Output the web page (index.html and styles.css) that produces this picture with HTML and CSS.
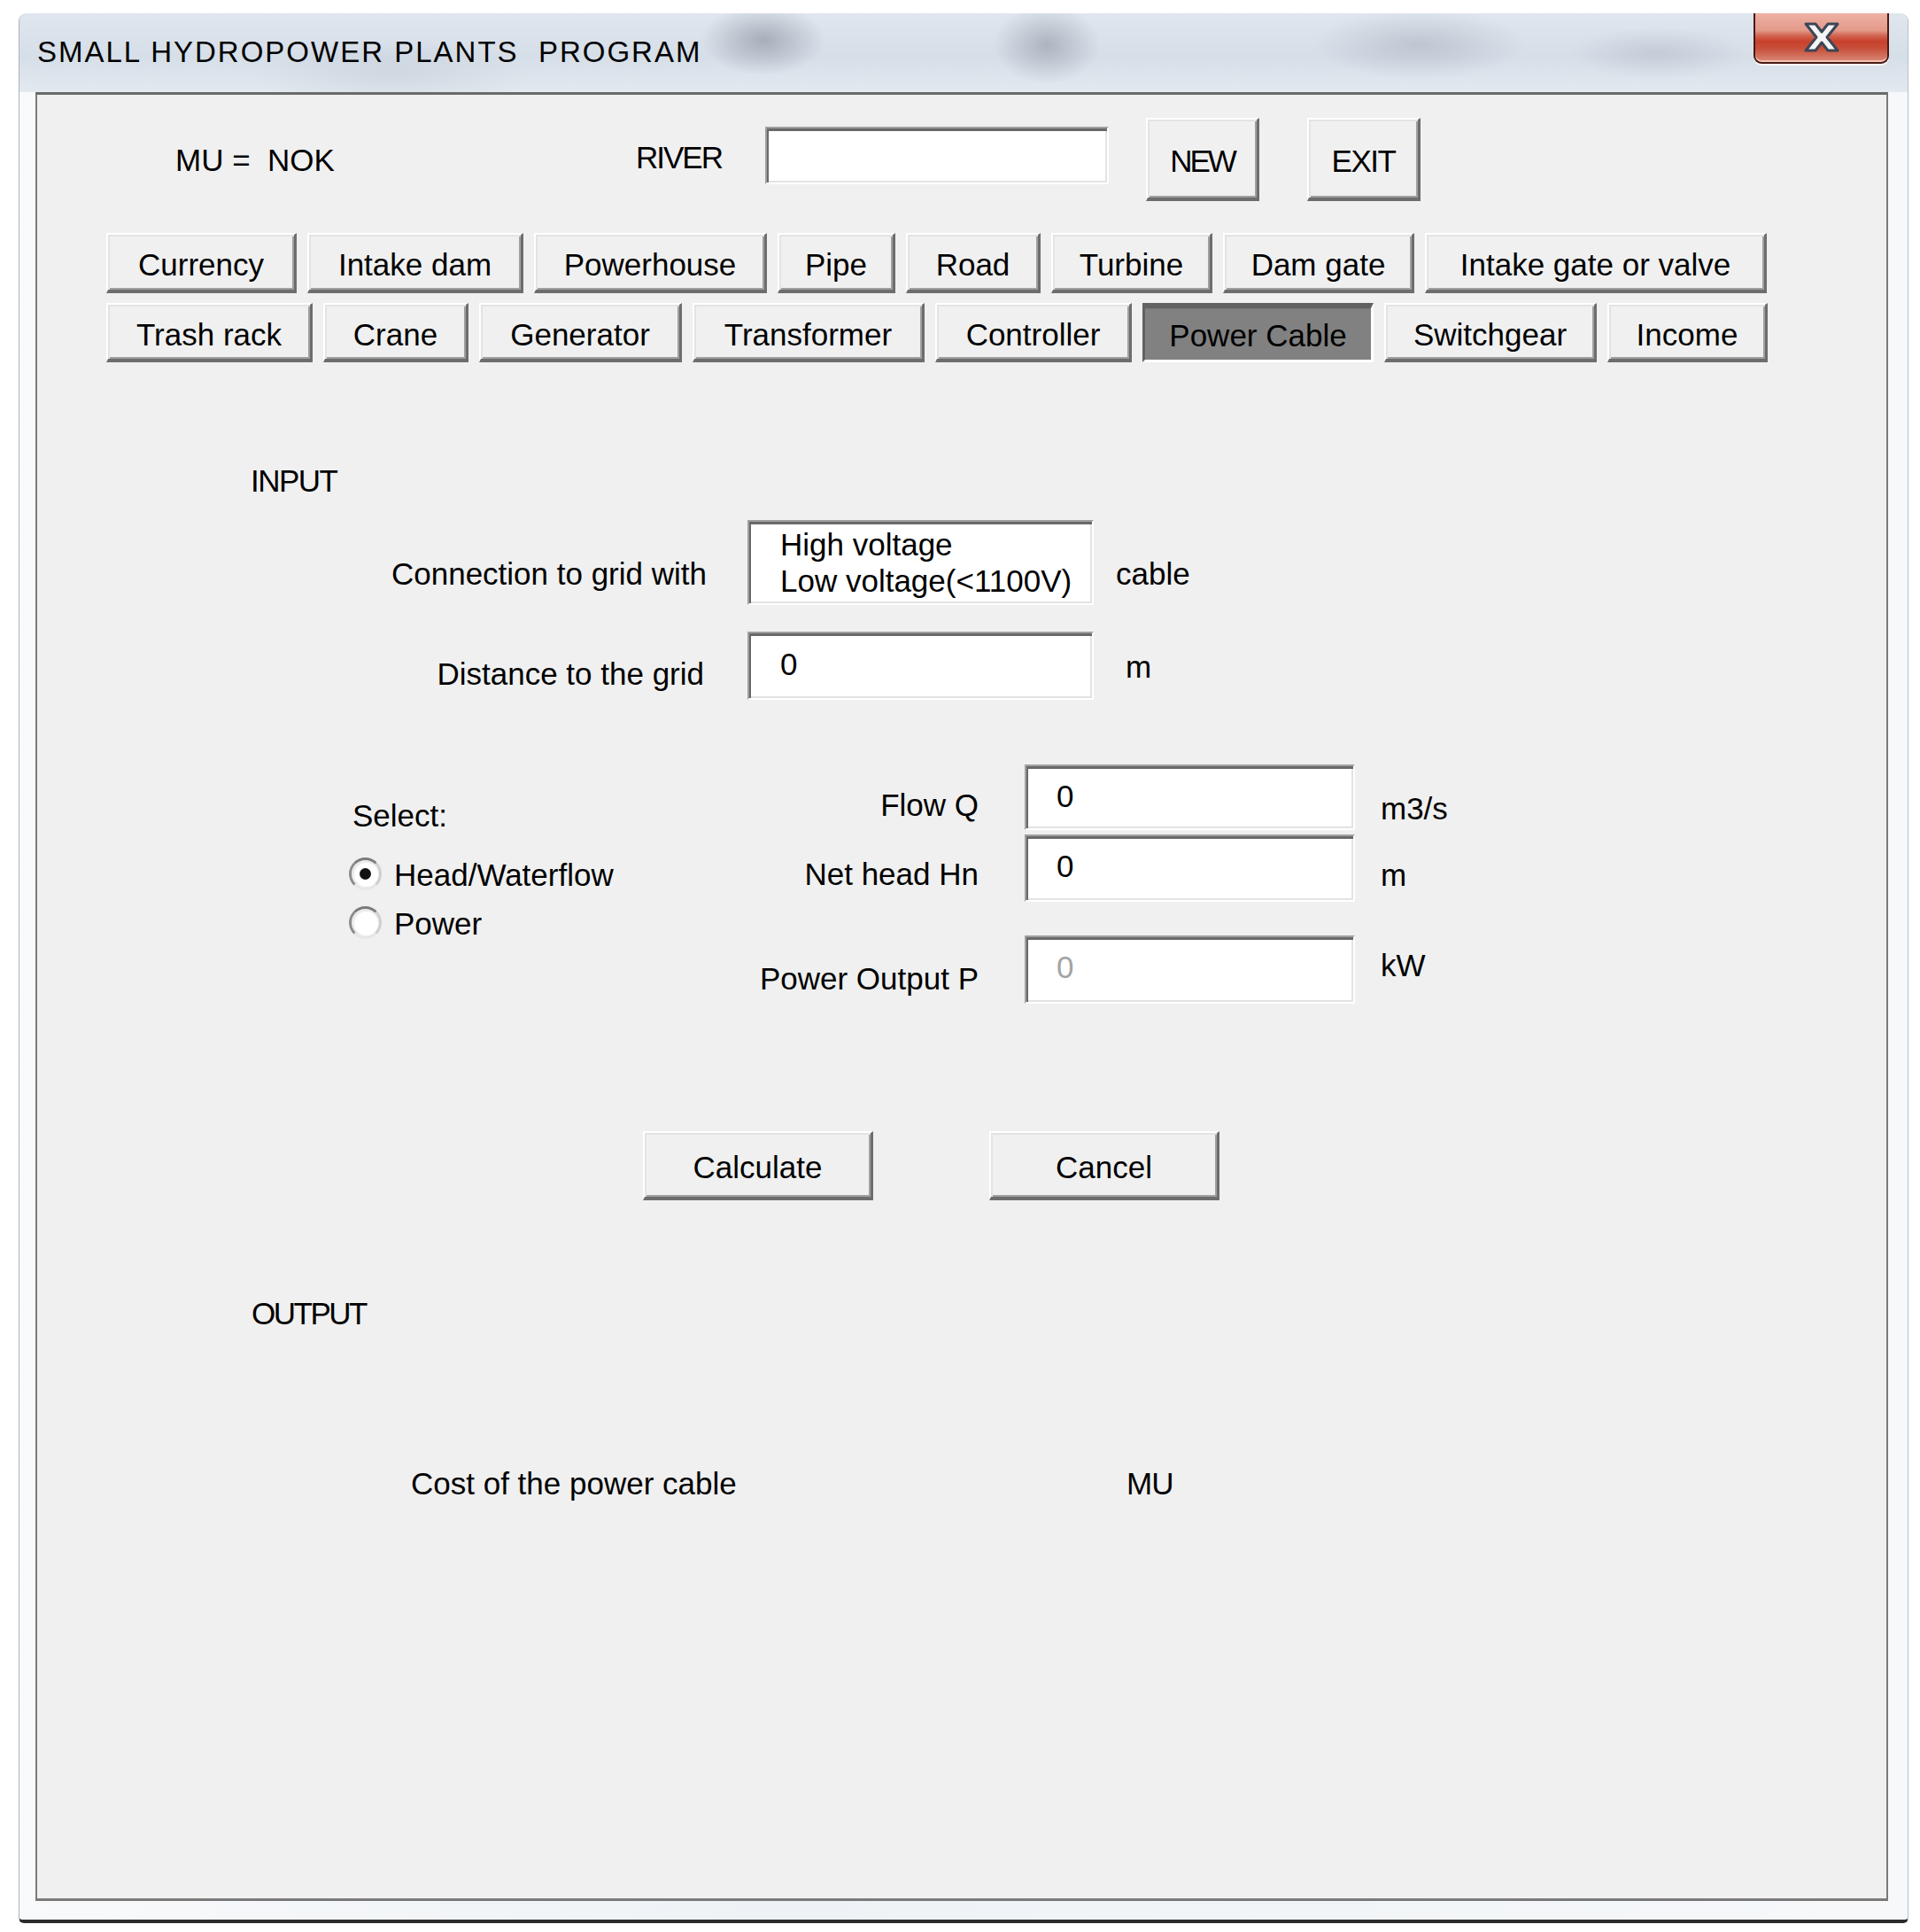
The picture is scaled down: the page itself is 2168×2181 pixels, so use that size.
FILE: index.html
```html
<!DOCTYPE html>
<html lang="en">
<head>
<meta charset="utf-8">
<title>SMALL HYDROPOWER PLANTS PROGRAM</title>
<link rel="stylesheet" href="styles.css">
</head>
<body>
<div class="window">
  <div class="titlebar">
    <div class="title">SMALL HYDROPOWER PLANTS&nbsp; PROGRAM</div>
    <div class="close">
      <svg class="close-x" width="44" height="36" viewBox="0 0 44 36">
        <path d="M4 3 H15 L22 12 L29 3 H40 L28 18 L40 33 H29 L22 24 L15 33 H4 L16 18 Z" fill="#f4f4f4" stroke="#3c4656" stroke-width="3" stroke-linejoin="round"/>
      </svg>
    </div>
  </div>
  <div class="client">
    <div class="toprow">
      <div class="mu">MU =&nbsp; NOK</div>
      <div class="river-label caps">RIVER</div>
      <div class="field river-input"></div>
      <button class="btn btn-new caps">NEW</button>
      <button class="btn btn-exit caps">EXIT</button>
    </div>

    <div class="tabs tabs1">
      <button class="btn w-currency">Currency</button>
      <button class="btn w-intake">Intake dam</button>
      <button class="btn w-powerhouse">Powerhouse</button>
      <button class="btn w-pipe">Pipe</button>
      <button class="btn w-road">Road</button>
      <button class="btn w-turbine">Turbine</button>
      <button class="btn w-damgate">Dam gate</button>
      <button class="btn w-intakegate">Intake gate or valve</button>
    </div>
    <div class="tabs tabs2">
      <button class="btn w-trash">Trash rack</button>
      <button class="btn w-crane">Crane</button>
      <button class="btn w-generator">Generator</button>
      <button class="btn w-transformer">Transformer</button>
      <button class="btn w-controller">Controller</button>
      <button class="btn active w-cable">Power Cable</button>
      <button class="btn w-switchgear">Switchgear</button>
      <button class="btn w-income">Income</button>
    </div>

    <div class="section-label input-label caps">INPUT</div>

    <div class="conn-row">
      <div class="conn-label">Connection to grid with</div>
      <div class="field listbox">
        <div>High voltage</div>
        <div>Low voltage(&lt;1100V)</div>
      </div>
      <div class="conn-unit">cable</div>
    </div>

    <div class="dist-row">
      <div class="dist-label">Distance to the grid</div>
      <div class="field dist-input"><span class="val">0</span></div>
      <div class="dist-unit">m</div>
    </div>

    <div class="hq">
      <div class="select-col">
        <div class="select-label">Select:</div>
        <div class="radio-row first">
          <span class="radio checked"></span>
          <span class="radio-text">Head/Waterflow</span>
        </div>
        <div class="radio-row second">
          <span class="radio"></span>
          <span class="radio-text">Power</span>
        </div>
      </div>
      <div class="fields">
        <div class="frow frow1">
          <div class="flabel">Flow Q</div>
          <div class="field finput"><span class="val">0</span></div>
          <div class="funit">m3/s</div>
        </div>
        <div class="frow frow2">
          <div class="flabel">Net head Hn</div>
          <div class="field finput"><span class="val">0</span></div>
          <div class="funit">m</div>
        </div>
        <div class="frow frow3">
          <div class="flabel">Power Output P</div>
          <div class="field finput"><span class="val disabled">0</span></div>
          <div class="funit">kW</div>
        </div>
      </div>
    </div>

    <div class="actions">
      <button class="btn act">Calculate</button>
      <button class="btn act">Cancel</button>
    </div>

    <div class="section-label output-label caps">OUTPUT</div>

    <div class="cost-row">
      <div class="cost-label">Cost of the power cable</div>
      <div class="cost-unit caps">MU</div>
    </div>
  </div>
</div>
</body>
</html>
```

FILE: styles.css
```css
html, body {
  margin: 0;
  padding: 0;
  background: #ffffff;
}

body {
  width: 2168px;
  height: 2181px;
  overflow: hidden;
}

.window {
  box-sizing: border-box;
  margin: 15px 0 0 21px;
  width: 2134px;
  height: 2156px;
  border-radius: 9px 9px 6px 6px;
  border-left: 1px solid #aab4bf;
  border-right: 1px solid #b6c0ca;
  border-bottom: 4px solid #2c2c2c;
  background:
    linear-gradient(90deg, rgba(255,255,255,0.6), rgba(255,255,255,0) 40%, rgba(255,255,255,0.5)),
    #eef2f6;
  display: flex;
  flex-direction: column;
  font-family: "Liberation Sans", Arial, sans-serif;
}

.titlebar {
  height: 89px;
  display: flex;
  align-items: flex-start;
  border-radius: 9px 9px 0 0;
  background:
    radial-gradient(ellipse 70px 40px at 840px 30px, rgba(70,80,95,0.35), rgba(70,80,95,0) 100%),
    radial-gradient(ellipse 60px 45px at 1160px 35px, rgba(70,80,95,0.30), rgba(70,80,95,0) 100%),
    radial-gradient(ellipse 120px 40px at 1580px 35px, rgba(110,120,135,0.25), rgba(110,120,135,0) 100%),
    radial-gradient(ellipse 160px 40px at 420px 70px, rgba(150,160,175,0.18), rgba(150,160,175,0) 100%),
    radial-gradient(ellipse 100px 30px at 1850px 45px, rgba(120,130,145,0.2), rgba(120,130,145,0) 100%),
    linear-gradient(180deg, #dfe6ee 0%, #d6dee8 55%, #e3e9ef 100%);
}

.title {
  margin-top: 24px;
  padding-left: 20px;
  font-size: 33px;
  line-height: 40px;
  letter-spacing: 2px;
  color: #000;
  white-space: nowrap;
}

.close {
  box-sizing: border-box;
  margin-left: auto;
  margin-right: 21px;
  width: 153px;
  height: 57px;
  border: 2px solid #4a1a12;
  border-top: none;
  border-radius: 0 0 9px 9px;
  background: linear-gradient(180deg, #eeb1a4 0%, #e39a8a 35%, #d0604c 47%, #c7412c 58%, #c84f3a 72%, #d98a78 100%);
  box-shadow: inset 0 -2px 0 rgba(255,220,210,0.7), 0 2px 0 rgba(255,255,255,0.8);
  display: flex;
  align-items: center;
  justify-content: center;
}

.close-x {
  display: block;
  margin-top: -2px;
}

.client {
  box-sizing: border-box;
  margin-left: 18px;
  width: 2092px;
  height: 2042px;
  border-style: solid;
  border-width: 3px 2px 3px 2px;
  border-color: #6a6a6a #7a7a7a #7a7a7a #7a7a7a;
  background: #f0f0f0;
  font-size: 35px;
  line-height: 40px;
  color: #000;
}

.caps {
  letter-spacing: -2px;
}

/* top row */
.toprow {
  display: flex;
  align-items: flex-start;
  margin-top: 26px;
  height: 94px;
}

.mu {
  margin-left: 156px;
  width: 520px;
  margin-top: 28px;
  white-space: nowrap;
}

.river-label {
  width: 146px;
  margin-top: 25px;
}

.river-input {
  width: 388px;
  height: 65px;
  margin-top: 10px;
}

.btn {
  box-sizing: border-box;
  margin: 0;
  padding: 6px 0 0 0;
  font: inherit;
  color: #000;
  background: #f0f0f0;
  border-style: solid;
  border-width: 2px 3px 4px 2px;
  border-color: #ffffff #6d6d6d #6d6d6d #ffffff;
  box-shadow: inset 2px 2px 0 #e3e3e3, inset -2px -2px 0 #a0a0a0;
  display: flex;
  align-items: center;
  justify-content: center;
  white-space: nowrap;
  cursor: default;
}

.btn-new {
  margin-left: 42px;
  width: 128px;
  height: 94px;
  letter-spacing: -3px;
}

.btn-exit {
  margin-left: 54px;
  width: 128px;
  height: 94px;
  letter-spacing: -1.5px;
}

/* tabs */
.tabs {
  display: flex;
  gap: 12px;
  margin-left: 78px;
}

.tabs1 {
  margin-top: 36px;
  height: 68px;
}

.tabs2 {
  margin-top: 11px;
  height: 67px;
}

.w-currency { width: 215px; }
.w-intake { width: 244px; }
.w-powerhouse { width: 263px; }
.w-pipe { width: 133px; }
.w-road { width: 152px; }
.w-turbine { width: 182px; }
.w-damgate { width: 216px; }
.w-intakegate { width: 386px; }

.w-trash { width: 233px; }
.w-crane { width: 164px; }
.w-generator { width: 229px; }
.w-transformer { width: 262px; }
.w-controller { width: 222px; }
.w-cable { width: 261px; }
.w-switchgear { width: 240px; }
.w-income { width: 181px; }

.btn.active {
  background: #818181;
  border-width: 6px 3px 3px 3px;
  border-color: #626262 #ffffff #ffffff #626262;
  box-shadow: inset 0 1px 0 #777777;
  padding-top: 4px;
}

/* fields */
.field {
  box-sizing: border-box;
  background: #ffffff;
  border-style: solid;
  border-width: 2px;
  border-color: #a0a0a0 #ffffff #ffffff #a0a0a0;
  box-shadow: inset 2px 3px 0 #696969, inset -2px -2px 0 #e3e3e3;
}

.val {
  display: block;
}

.val.disabled {
  color: #a3a3a3;
}

/* input label */
.section-label {
  white-space: nowrap;
}

.input-label {
  margin-top: 114px;
  margin-left: 241px;
  letter-spacing: -1.5px;
}

.conn-row {
  display: flex;
  align-items: flex-start;
  margin-top: 24px;
}

.conn-label {
  width: 756px;
  margin-top: 41px;
  text-align: right;
  white-space: nowrap;
}

.listbox {
  margin-left: 46px;
  width: 391px;
  height: 96px;
  padding: 5px 0 0 35px;
  line-height: 41px;
  white-space: nowrap;
  overflow: hidden;
}

.conn-unit {
  margin-left: 25px;
  margin-top: 41px;
}

.dist-row {
  display: flex;
  align-items: flex-start;
  margin-top: 30px;
}

.dist-label {
  width: 753px;
  margin-top: 28px;
  text-align: right;
  white-space: nowrap;
}

.dist-input {
  margin-left: 49px;
  width: 391px;
  height: 77px;
  padding: 15px 0 0 35px;
}

.dist-unit {
  margin-left: 36px;
  margin-top: 20px;
}

/* head / flow section */
.hq {
  display: flex;
  align-items: flex-start;
  margin-top: 73px;
}

.select-col {
  width: 758px;
}

.select-label {
  margin-top: 38px;
  margin-left: 356px;
}

.radio-row {
  display: flex;
  align-items: flex-start;
  margin-left: 352px;
}

.radio-row.first {
  margin-top: 27px;
}

.radio-row.second {
  margin-top: 15px;
}

.radio {
  box-sizing: border-box;
  width: 37px;
  height: 37px;
  border-radius: 50%;
  border: 3px solid;
  border-color: #7b7b7b #cfcfcf #e6e6e6 #8c8c8c;
  background: #ffffff;
  box-shadow: inset 1px 1px 0 2px #ececec;
  display: flex;
  align-items: center;
  justify-content: center;
  flex: none;
}

.radio.checked::after {
  content: "";
  width: 13px;
  height: 13px;
  border-radius: 50%;
  background: #111111;
}

.radio-text {
  margin-left: 14px;
  white-space: nowrap;
}

.fields {
  display: flex;
  flex-direction: column;
}

.frow {
  display: flex;
  align-items: flex-start;
}

.flabel {
  width: 305px;
  text-align: right;
  white-space: nowrap;
}

.finput {
  margin-left: 52px;
  width: 373px;
  padding: 14px 0 0 34px;
}

.funit {
  margin-left: 29px;
  white-space: nowrap;
}

.frow1 .finput { height: 74px; }
.frow1 .flabel { margin-top: 26px; }
.frow1 .funit { margin-top: 30px; }

.frow2 { margin-top: 5px; }
.frow2 .finput { height: 76px; }
.frow2 .flabel { margin-top: 25px; }
.frow2 .funit { margin-top: 26px; }

.frow3 { margin-top: 38px; }
.frow3 .finput { height: 77px; }
.frow3 .flabel { margin-top: 29px; }
.frow3 .funit { margin-top: 14px; }

/* actions */
.actions {
  display: flex;
  gap: 131px;
  margin-top: 144px;
  margin-left: 684px;
}

.act {
  width: 260px;
  height: 78px;
}

/* output */
.output-label {
  margin-top: 108px;
  margin-left: 242px;
  letter-spacing: -2.5px;
}

.cost-row {
  display: flex;
  margin-top: 152px;
}

.cost-label {
  margin-left: 422px;
  width: 808px;
  white-space: nowrap;
}

.cost-unit {
  letter-spacing: -1px;
}
```
